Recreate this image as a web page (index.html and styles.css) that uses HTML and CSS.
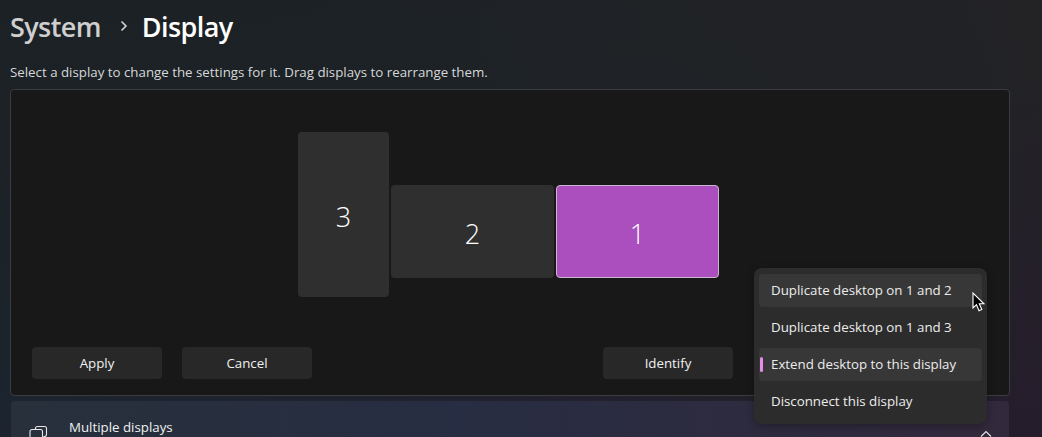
FILE: index.html
```html
<!DOCTYPE html>
<html lang="en">
<head>
<meta charset="utf-8">
<title>Display</title>
<link rel="stylesheet" href="styles.css">
</head>
<body>
<main class="page">
  <header class="crumbs">
    <span class="crumb-parent">System</span>
    <svg class="crumb-sep" width="10" height="12" viewBox="0 0 10 12"><path d="M2.500 1.500 7 6 2.500 10.500" fill="none" stroke="#d4d5d6" stroke-width="1.600"/></svg>
    <span class="crumb-current">Display</span>
  </header>
  <p class="hint">Select a display to change the settings for it. Drag displays to rearrange them.</p>
  <section class="panel">
    <div class="canvas">
      <div class="monitor m3">3</div>
      <div class="monitor m2">2</div>
      <div class="monitor m1">1</div>
    </div>
    <div class="actions">
      <div class="action-group">
        <button class="btn">Apply</button>
        <button class="btn">Cancel</button>
      </div>
      <button class="btn">Identify</button>
    </div>
  </section>
  <section class="row">
    <svg class="row-icon" width="20" height="20" viewBox="0 0 20 20"><path d="M6.500 4.500V3.500a2 2 0 0 1 2-2h7a2 2 0 0 1 2 2v6a2 2 0 0 1-2 2h-1M3 4.500h8.500a2 2 0 0 1 2 2v7a2 2 0 0 1-2 2H3a2 2 0 0 1-2-2v-7a2 2 0 0 1 2-2Z" fill="none" stroke="#e8e8e8" stroke-width="1.100"/></svg>
    <span class="row-title">Multiple displays</span>
    <svg class="row-chevron" width="12" height="8" viewBox="0 0 12 8"><path d="M1 6.500 6 1.500l5 5" fill="none" stroke="#e6e6e6" stroke-width="1.100"/></svg>
  </section>
  <ul class="menu">
    <li class="item hover">Duplicate desktop on 1 and 2</li>
    <li class="item">Duplicate desktop on 1 and 3</li>
    <li class="item selected">Extend desktop to this display</li>
    <li class="item">Disconnect this display</li>
  </ul>
  <svg class="cursor" width="13" height="21" viewBox="0 0 13 21"><path d="M1 1v15l3.500-3.300 2.500 6 2.800-1.200-2.500-5.700h4.700Z" fill="#000" stroke="#fff" stroke-width="1.100"/></svg>
</main>
</body>
</html>
```
FILE: styles.css
```css
* { box-sizing: border-box; }
html, body { margin: 0; height: 100%; }
body {
  overflow: hidden;
  background: linear-gradient(180deg, #1c2125 0%, #1c2328 60%, #1a2631 100%);
  font-family: "Open Sans", "Noto Sans", sans-serif;
  color: #fff;
}
.page {
  position: relative; width: 1042px; height: 437px; overflow: hidden; padding: 0 32px 0 10px;
  background:
    linear-gradient(165deg, rgba(38,28,44,0) 50%, rgba(38,28,44,.95) 100%),
    linear-gradient(250deg, rgba(35,35,38,1) 0%, rgba(35,35,38,0) 65%);
}
.crumbs { display: flex; align-items: center; height: 52px; font-size: 27px; font-weight: 600; letter-spacing: -0.6px; }
.crumb-parent { color: #cfcfd0; }
.crumb-sep { margin: 0 13px 0 18px; }
.crumb-current { color: #fff; }
.hint { margin: 11px 0 0; height: 26px; font-size: 13.3px; line-height: 18px; color: #d6d7d8; }
.panel {
  display: flex; flex-direction: column; justify-content: flex-end;
  position: relative;
  height: 307px; width: 1000px;
  padding: 0 21px 16px;
  background: #181818;
  border: 1px solid #3a3c40;
  border-radius: 4px;
}
.canvas { position: absolute; inset: 0; }
.monitor {
  position: absolute;
  display: flex; align-items: center; justify-content: center;
  padding-top: 3px;
  background: #2f2f2f;
  border-radius: 4px;
  font-size: 27px;
  font-weight: 360;
  color: #fff;
}
.m3 { left: 287px; top: 42px; width: 91px; height: 165px; }
.m2 { left: 380px; top: 95px; width: 163px; height: 93px; }
.m1 {
  left: 545px; top: 95px; width: 163px; height: 93px;
  background: #aa4fbd;
  border: 1px solid #c9b6ce;
}
.actions { position: relative; display: flex; justify-content: space-between; width: 701px; }
.action-group { display: flex; gap: 20px; }
.btn {
  width: 130px; height: 32px; padding: 0;
  font: 400 13.300px "Open Sans", "Noto Sans", sans-serif;
  color: #f0f0f0;
  background: #282828;
  border: 0; border-radius: 4px;
}
.row {
  position: relative;
  display: flex; align-items: flex-start;
  margin: 5px 0 0 1px;
  width: 998px; height: 60px;
  padding: 17px 17px 0 18px;
  background: linear-gradient(90deg, #27303b 0%, #272d42 45%, #33293c 100%);
  border-radius: 4px 4px 0 0;
}
.row-icon { margin: 7px 20px 0 0; flex: none; }
.row-title { font-size: 13.300px; line-height: 18px; color: #f0f0f0; }
.row-chevron { margin-left: auto; margin-top: 12px; }
.menu {
  position: absolute; left: 754px; top: 268px;
  width: 233px; height: 156px;
  margin: 0; padding: 6px 5px;
  list-style: none;
  background: #2c2c2c;
  border-radius: 8px;
  box-shadow: 0 2px 8px rgba(0,0,0,.3);
}
.item {
  position: relative;
  height: 33px; margin-bottom: 4px;
  padding-left: 12px;
  font-size: 13.300px; line-height: 32px;
  color: #ececec;
  border-radius: 4px;
}
.item.hover, .item.selected { background: #373737; }
.item.selected::before {
  content: ""; position: absolute; left: 1px; top: 9px;
  width: 3px; height: 15px;
  background: #e28de8; border-radius: 2px;
}
.cursor { position: absolute; left: 972px; top: 292px; }
```
